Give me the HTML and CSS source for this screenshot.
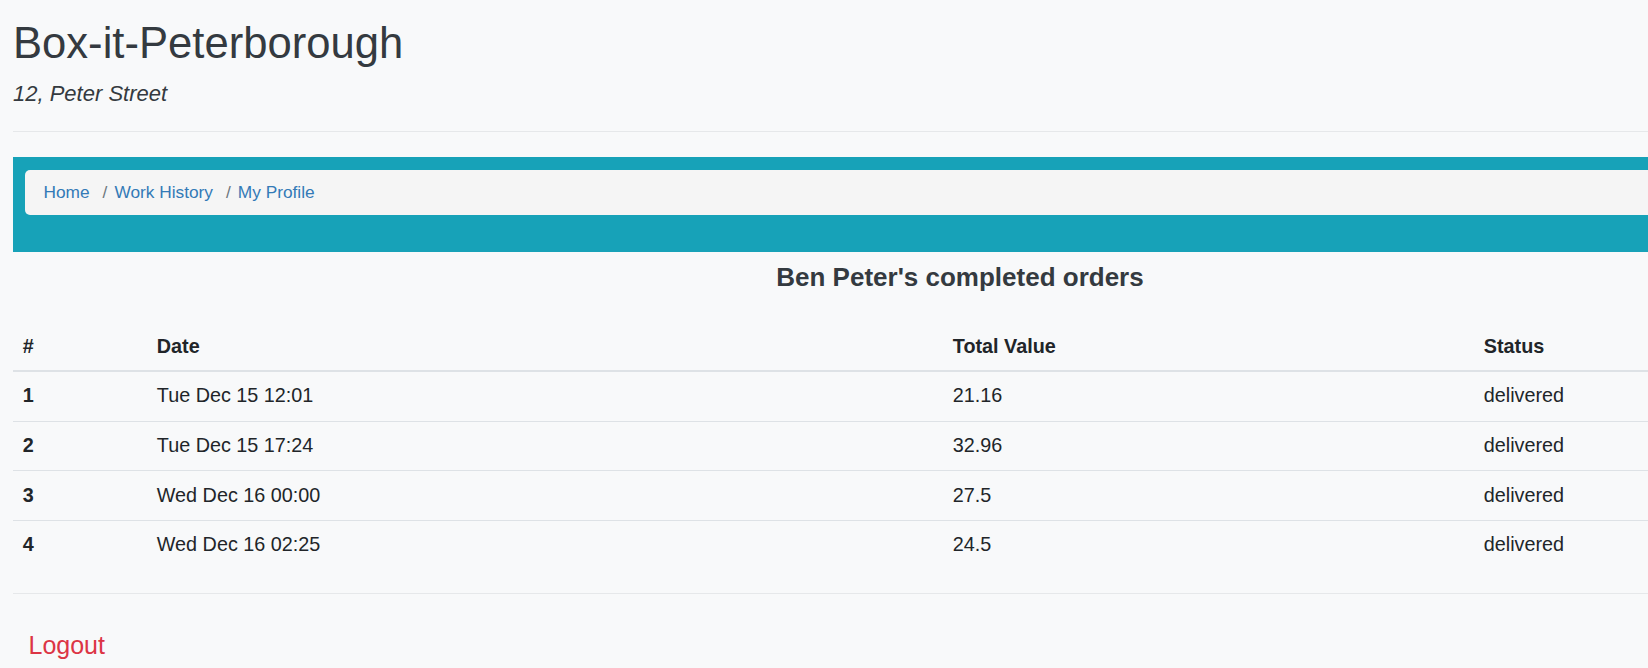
FILE: index.html
```html
<!DOCTYPE html>
<html lang="en">
<head>
<meta charset="utf-8">
<title>Box-it-Peterborough</title>
<link rel="stylesheet" href="styles.css">
</head>
<body>
<div class="page">
  <header class="site-header">
    <h1 class="site-title">Box-it-Peterborough</h1>
    <p class="site-address">12, Peter Street</p>
  </header>
  <hr class="rule">
  <nav class="nav-band">
    <ol class="crumbs">
      <li class="crumb"><a href="#">Home</a></li>
      <li class="crumb"><a href="#">Work History</a></li>
      <li class="crumb"><a href="#">My Profile</a></li>
    </ol>
  </nav>
  <h4 class="orders-title">Ben Peter's completed orders</h4>
  <table class="orders">
    <colgroup>
      <col class="c-num">
      <col class="c-date">
      <col class="c-value">
      <col class="c-status">
    </colgroup>
    <thead>
      <tr><th>#</th><th>Date</th><th>Total Value</th><th>Status</th></tr>
    </thead>
    <tbody>
      <tr><th>1</th><td>Tue Dec 15 12:01</td><td>21.16</td><td>delivered</td></tr>
      <tr><th>2</th><td>Tue Dec 15 17:24</td><td>32.96</td><td>delivered</td></tr>
      <tr><th>3</th><td>Wed Dec 16 00:00</td><td>27.5</td><td>delivered</td></tr>
      <tr><th>4</th><td>Wed Dec 16 02:25</td><td>24.5</td><td>delivered</td></tr>
    </tbody>
  </table>
  <hr class="rule rule-bottom">
  <a class="logout" href="#">Logout</a>
</div>
</body>
</html>
```

FILE: styles.css
```css
html {
  overflow: hidden;
}

body {
  margin: 0;
  background: #f8f9fa;
  font-family: "Liberation Sans", Arial, sans-serif;
  color: #212529;
}

.page {
  width: 1894px;
  margin-left: 13px;
}

.site-header {
  padding-top: 17px;
}

.site-title {
  margin: 0 0 8px;
  font-size: 43.6px;
  font-weight: 400;
  line-height: 1.2;
  color: #343a40;
}

.site-address {
  margin: 0;
  font-size: 22px;
  line-height: 33px;
  font-style: italic;
  color: #343a40;
}

.rule {
  margin: 21px 0 0;
  border: 0;
  border-top: 1px solid #e6e8ea;
}

.nav-band {
  margin-top: 25px;
  background: #17a2b8;
  padding: 13px 12px 37px;
}

.crumbs {
  display: flex;
  margin: 0;
  padding: 10px 18.5px;
  list-style: none;
  background: #f5f5f5;
  border-radius: 5px;
  font-size: 17.3px;
  line-height: 25px;
}

.crumb a {
  color: #337ab7;
  text-decoration: none;
}

.crumb + .crumb {
  padding-left: 13px;
}

.crumb + .crumb::before {
  content: "/";
  padding-right: 7px;
  color: #6c757d;
}

.orders-title {
  margin: 10px 0 28.5px;
  text-align: center;
  font-size: 26px;
  line-height: 1.2;
  font-weight: 700;
  color: #343a40;
}

.orders {
  width: 100%;
  border-collapse: collapse;
  font-size: 19.8px;
  line-height: 29.7px;
  color: #212529;
}

.c-num { width: 134px; }
.c-date { width: 796px; }
.c-value { width: 531px; }

.orders th,
.orders td {
  text-align: left;
  padding: 9.5px 9.8px;
}

.orders thead th {
  padding: 9.6px 9.8px 8.5px;
  border-bottom: 2px solid #dee2e6;
  font-weight: 700;
}

.orders tbody th {
  font-weight: 700;
}

.orders tbody tr + tr th,
.orders tbody tr + tr td {
  border-top: 1px solid #dee2e6;
}

.rule-bottom {
  margin-top: 23px;
}

.logout {
  display: inline-block;
  margin-top: 24px;
  padding: 9.6px 15.5px;
  font-size: 25px;
  line-height: 1.5;
  color: #dc3545;
  text-decoration: none;
}
```
